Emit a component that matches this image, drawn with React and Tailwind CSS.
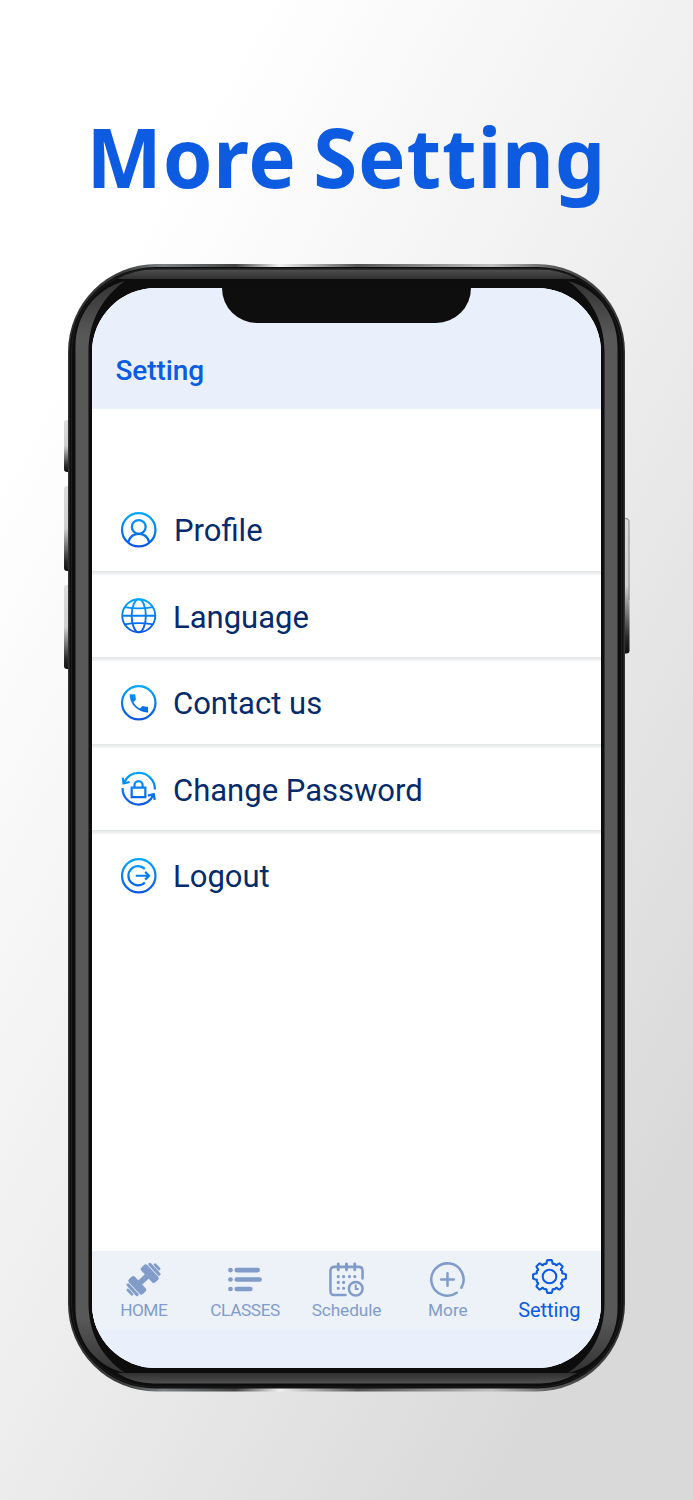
import React from "react";

function Bezel() {
  return (
    <svg className="absolute inset-0 h-full w-full" viewBox="60 260 575 1140" aria-hidden="true">
      <defs>
        <linearGradient id="key" x1="0" y1="0" x2="0" y2="1">
          <stop offset="0" stopColor="#dcdcdc" />
          <stop offset="0.5" stopColor="#cfcfcf" />
          <stop offset="0.88" stopColor="#2a2a2a" />
          <stop offset="1" stopColor="#111" />
        </linearGradient>
        <linearGradient id="edge" x1="0" y1="0" x2="1" y2="0">
          <stop offset="0" stopColor="#333" />
          <stop offset="0.1" stopColor="#3c3c3c" />
          <stop offset="0.17" stopColor="#7c8284" />
          <stop offset="0.3" stopColor="#444" />
          <stop offset="0.38" stopColor="#f2f2f2" />
          <stop offset="0.52" stopColor="#555" />
          <stop offset="0.76" stopColor="#c0c0c0" />
          <stop offset="0.88" stopColor="#555" />
          <stop offset="1" stopColor="#333" />
        </linearGradient>
        <linearGradient id="bar" x1="0" y1="0" x2="0" y2="1">
          <stop offset="0" stopColor="#4f4f4f" />
          <stop offset="1" stopColor="#303030" />
        </linearGradient>
        <linearGradient id="barLow" x1="0" y1="0" x2="0" y2="1">
          <stop offset="0" stopColor="#303030" />
          <stop offset="1" stopColor="#4f4f4f" />
        </linearGradient>
        <linearGradient id="side" x1="0" y1="0" x2="0" y2="1">
          <stop offset="0" stopColor="#333" />
          <stop offset="0.05" stopColor="#585858" />
          <stop offset="0.95" stopColor="#585858" />
          <stop offset="1" stopColor="#333" />
        </linearGradient>
      </defs>
      <rect x="64" y="420" width="8" height="52" rx="3" fill="url(#key)" />
      <rect x="64" y="486" width="8" height="85" rx="3" fill="url(#key)" />
      <rect x="64" y="585" width="8" height="84" rx="3" fill="url(#key)" />
      <rect x="621" y="517.500" width="8.500" height="136" rx="3" fill="url(#key)" />
      <path d="M625 518.500Q629 518.500 629 521V600" fill="none" stroke="#8c8c8c" />
      <rect x="68" y="264" width="557" height="1127.500" rx="88" fill="url(#edge)" />
      <rect x="69.500" y="267" width="554" height="1121.500" rx="86" fill="#0d0d0d" />
      <rect x="71.500" y="268.500" width="550" height="1118.500" rx="84" fill="none" stroke="#232323" strokeWidth="0.800" />
      <path d="M117 279Q134 269.500 154 269.500H540Q560 269.500 577 279Z" fill="url(#bar)" />
      <path d="M117 1373H577Q560 1383.500 540 1383.500H154Q134 1383.500 117 1373Z" fill="url(#barLow)" />
      <path d="M75.500 1308V347C75.500 315 95 289 125 281C103 297 88.500 320 88.500 352V1303C88.500 1335 103 1358 125 1373C95 1366 75.500 1340 75.500 1308Z" fill="url(#side)" />
      <path d="M617.500 1308V347C617.500 315 598 289 568 281C590 297 604.500 320 604.500 352V1303C604.500 1335 590 1358 568 1373C598 1366 617.500 1340 617.500 1308Z" fill="url(#side)" />
    </svg>
  );
}

function MenuIcon({ children }) {
  return (
    <svg width="37" height="37" viewBox="-0.5 -0.5 36.5 36.5" fill="none" stroke="url(#blue)" strokeWidth="2.2" className="shrink-0">
      {children}
    </svg>
  );
}

function Gradients() {
  return (
    <svg width="0" height="0" className="absolute" aria-hidden="true">
      <defs>
        <linearGradient id="blue" gradientUnits="userSpaceOnUse" x1="0" y1="0" x2="0" y2="36">
          <stop offset="0" stopColor="#00aaff" />
          <stop offset="1" stopColor="#0b53e0" />
        </linearGradient>
      </defs>
    </svg>
  );
}

// Eight rounded teeth, each described by polar offsets around its axis.
const toothProfile = [
  [-16, 13.4],
  [-12.5, 13.9],
  [-10.5, 15.6],
  [-7.5, 17],
  [7.5, 17],
  [10.5, 15.6],
  [12.5, 13.9],
  [16, 13.4],
  [19.5, 14],
  [25.5, 14],
];
const gearPoints = Array.from({ length: 8 })
  .flatMap((_, k) =>
    toothProfile.map(([deg, r]) => {
      const a = ((k * 45 + deg - 90) * Math.PI) / 180;
      return `${(18 + r * Math.cos(a)).toFixed(2)},${(18 + r * Math.sin(a)).toFixed(2)}`;
    })
  )
  .join(" ");

const menu = [
  {
    label: "Profile",
    text: "pl-px",
    icon: (
      <>
        <circle cx="18" cy="18" r="16.500" />
        <circle cx="18" cy="15.200" r="6.800" />
        <path d="M7.500 30.500C9 25 13 22 18 22S27 25 28.500 30.500" />
      </>
    ),
  },
  {
    label: "Language",
    text: "pl-0",
    icon: (
      <g strokeWidth="1.900">
        <circle cx="18" cy="18" r="16.300" />
        <ellipse cx="18" cy="18" rx="7" ry="16.300" />
        <path d="M1.700 18H34.300M4 9.500Q18 12 32 9.500M4 26.500Q18 24 32 26.500" />
      </g>
    ),
  },
  {
    label: "Contact us",
    text: "pl-0",
    icon: (
      <>
        <circle cx="18" cy="18" r="16.500" />
        <path d="M9 9.500H14.500L15.200 15L12.800 17.200Q14.500 21.500 19.200 23.600L21.500 21.200L27.200 22.200V27.500Q20 27.800 14.500 22.500Q9 17 9 9.500Z" fill="url(#blue)" stroke="none" />
      </>
    ),
  },
  {
    label: "Change Password",
    text: "pl-0",
    icon: (
      <>
        <path d="M3.500 12Q8 2.300 18 2.300C27 2.300 34 9.500 34 18.800M2.200 7L3 12.800L9 11.300M32.500 24Q28 33.700 18 33.700C9 33.700 2 26.500 2 17.200M33.800 29L32.800 23.300L27 24.800" />
        <path d="M11 17H24.500V26.200H11ZM13.800 17V14.500A4 4 0 0 1 21.800 14.500V17" />
      </>
    ),
  },
  {
    label: "Logout",
    text: "pl-0",
    icon: (
      <>
        <circle cx="18" cy="18" r="16.500" />
        <path d="M24 11.300A9.500 9.500 0 1 0 24 24.700" />
        <path d="M15 18H27.500M24.300 14.200L28.100 18L24.300 21.800" />
      </>
    ),
  },
];

const tabs = [
  {
    label: "HOME",
    text: "tracking-[-0.5px] mt-[3px] text-[17.25px] leading-[20px]",
    icon: (
      <g transform="rotate(-43 18 18)" fill="currentColor" stroke="none">
        <rect x="12" y="15" width="12" height="6" />
        <rect x="5" y="7.500" width="8.500" height="21" rx="2.500" />
        <rect x="22.500" y="7.500" width="8.500" height="21" rx="2.500" />
        <rect x="1" y="9.500" width="3.200" height="17" rx="1.600" />
        <rect x="31.800" y="9.500" width="3.200" height="17" rx="1.600" />
        <rect x="-2.500" y="13.500" width="2.800" height="9" rx="1.400" />
        <rect x="35.700" y="13.500" width="2.800" height="9" rx="1.400" />
      </g>
    ),
  },
  {
    label: "CLASSES",
    text: "tracking-[-0.4px] mt-[3px] text-[17.25px] leading-[20px]",
    icon: (
      <path d="M2.500 8.300H2.600M9 8.300H30.500M2.500 18H2.600M9 18H32.500M2.500 27.800H2.600M9 27.800H23" strokeWidth="4.800" strokeLinecap="round" />
    ),
  },
  {
    label: "Schedule",
    text: "tracking-[-0.1px] mt-[3px] text-[17.25px] leading-[20px]",
    icon: (
      <g strokeLinecap="round">
        <path d="M17 34H5.500Q1.500 34 1.500 30V9Q1.500 5 5.500 5H30.500Q34.500 5 34.500 9V17" />
        <path d="M9.500 2V8M18 2V8M26.500 2V8" strokeWidth="3" />
        <path d="M9.500 15H9.600M15 15H15.100M21 15H21.100M26.500 15H26.600M9.500 21H9.600M15 21H15.100M9.500 27H9.600M15 27H15.100" strokeWidth="3.200" />
        <circle cx="27.500" cy="27.500" r="7" />
        <path d="M27.500 24V27.800H29.800" strokeWidth="2" />
      </g>
    ),
  },
  {
    label: "More",
    text: "tracking-[0px] mt-[3px] text-[17.25px] leading-[20px]",
    icon: (
      <g strokeLinecap="round">
        <path d="M32.200 26.500A16.600 16.600 0 1 0 27.500 31.600" />
        <path d="M18 11.500V24.500M11.500 18H24.500" />
      </g>
    ),
  },
  {
    label: "Setting",
    active: true,
    text: "mt-[3.5px] text-[20px] leading-[24px] tracking-[-0.1px]",
    icon: (
      <g strokeWidth="2.100" strokeLinejoin="round">
        <circle cx="18" cy="18" r="7" />
        <polygon points={gearPoints} />
      </g>
    ),
  },
];

export default function App() {
  return (
    <main className="flex h-[1500px] w-[693px] flex-col overflow-hidden bg-[linear-gradient(119deg,#ffffff_0%,#ffffff_17%,#eeeeee_51%,#d9d9d9_87%,#d9d9d9_100%)] font-['Roboto',sans-serif]">
      <Gradients />
      <h1 className="h-[260px] origin-left scale-x-[0.962] whitespace-nowrap pt-[99px] pl-[90px] font-['Noto_Sans','Open_Sans',sans-serif] text-[83px] leading-[114px] font-bold tracking-[0.8px] [word-spacing:-5px] text-[#0c5be0]">
        More Setting
      </h1>
      <div className="relative ml-[60px] h-[1140px] w-[575px] pt-[28px] pl-[32px]">
        <Bezel />
        <div className="relative flex h-[1080px] w-[509px] flex-col overflow-hidden rounded-[64px] bg-white">
          <header className="flex h-[121px] shrink-0 flex-col bg-[#e9f0fb]">
            <div className="h-[35px] w-[249px] self-center rounded-b-[36px] bg-[#0e0e0e]" />
            <h2 className="mt-[31px] pl-[23.5px] text-[28px] leading-[34px] font-medium tracking-[-0.1px] text-[#0c5be0]">Setting</h2>
          </header>
          <ul className="mt-[79px] flex-1">
            {menu.map((item, i) => (
              <li key={item.label} className="flex h-[86.5px] flex-col">
                <div className="flex flex-1 items-center pl-[28px]">
                  <MenuIcon>{item.icon}</MenuIcon>
                  <span className={"ml-[16px] pt-[3.5px] text-[31px] leading-[36px] text-[#052b6c] " + item.text}>{item.label}</span>
                </div>
                <div className={"h-[4px] " + (i < menu.length - 1 ? "bg-linear-to-b from-[#e2e5e6] to-[#f6f7f7]" : "")} />
              </li>
            ))}
          </ul>
          <nav className="h-[117px] shrink-0 bg-[#e9f0fb]">
            <div className="grid h-[78px] grid-cols-5 bg-[#edf2f9] px-px">
              {tabs.map((tab) => (
                <div
                  key={tab.label}
                  className={
                    "flex flex-col items-center " +
                    (tab.active ? "pt-[8px] text-[#0c5be0]" : "pt-[11px] text-[#819cc9]")
                  }
                >
                  <svg width="35" height="35" viewBox="0 0 36 36" fill="none" stroke="currentColor" strokeWidth="2.6" className="shrink-0 overflow-visible">
                    {tab.icon}
                  </svg>
                  <span className={tab.text}>{tab.label}</span>
                </div>
              ))}
            </div>
          </nav>
        </div>
      </div>
    </main>
  );
}
